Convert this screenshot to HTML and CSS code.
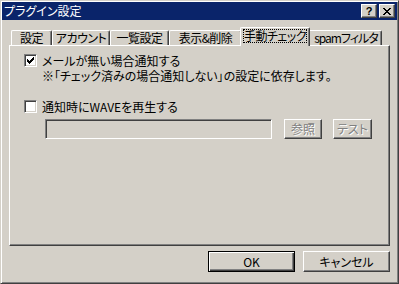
FILE: index.html
```html
<!DOCTYPE html>
<html lang="ja">

<head>
    <meta charset="UTF-8">
    <title>プラグイン設定</title>
    <link rel="stylesheet" href="styles.css">
</head>

<body>
    <div class="window">
        <div class="titlebar">
            <span class="title">プラグイン設定</span>
            <div class="caption-buttons">
                <span class="cap-btn help">?</span>
                <span class="cap-btn close">
                    <svg width="8" height="7" viewBox="0 0 8 7" shape-rendering="crispEdges">
                        <path d="M0 0h2v1h-2zM6 0h2v1h-2zM1 1h2v1h-2zM5 1h2v1h-2zM2 2h4v1h-4zM3 3h2v1h-2zM2 4h4v1h-4zM1 5h2v1h-2zM5 5h2v1h-2zM0 6h2v1h-2zM6 6h2v1h-2z" fill="#000"/>
                    </svg>
                </span>
            </div>
        </div>

        <div class="client">
            <div class="tabs">
                <div class="tab tab-general">設定</div>
                <div class="tab tab-account">アカウント</div>
                <div class="tab tab-list">一覧設定</div>
                <div class="tab tab-view">表示&amp;削除</div>
                <div class="tab tab-check selected"><span class="focus">手動チェック</span></div>
                <div class="tab tab-spam">spamフィルタ</div>
            </div>

            <div class="panel">
                <div class="check-row">
                    <span class="checkbox">
                        <svg width="9" height="9" viewBox="0 0 9 9" shape-rendering="crispEdges">
                            <path d="M7 1h1v1h-1zM6 2h2v1h-2zM1 3h1v1h-1zM5 3h3v1h-3zM1 4h2v1h-2zM4 4h3v1h-3zM1 5h5v1h-5zM2 6h3v1h-3zM3 7h1v1h-1z" fill="#000"/>
                        </svg>
                    </span>
                    <span>メールが無い場合通知する</span>
                </div>
                <div class="note">※「チェック済みの場合通知しない」の設定に依存します。</div>

                <div class="check-row wave-row">
                    <span class="checkbox"></span>
                    <span>通知時にWAVEを再生する</span>
                </div>

                <div class="file-row">
                    <div class="field"></div>
                    <button class="btn disabled browse">参照</button>
                    <button class="btn disabled test">テスト</button>
                </div>
            </div>

            <div class="dialog-buttons">
                <button class="btn default">OK</button>
                <button class="btn">キャンセル</button>
            </div>
        </div>
    </div>
</body>

</html>
```

FILE: styles.css
```css
body {
    margin: 0;
    font-family: "Noto Sans CJK JP", "Liberation Sans", sans-serif;
    font-size: 12px;
    font-feature-settings: "palt";
    color: #000;
}

.window {
    width: 399px;
    height: 284px;
    box-sizing: border-box;
    padding: 1px;
    background-color: #d4d0c8;
    border: 1px solid;
    border-color: #d4d0c8 #404040 #404040 #d4d0c8;
    box-shadow: inset 1px 1px #fff, inset -1px -1px #808080;
    display: flex;
    flex-direction: column;
}

.titlebar {
    height: 18px;
    flex: none;
    background-color: #0a246a;
    color: #fff;
    display: flex;
    align-items: center;
    justify-content: space-between;
    padding: 0 2px 0 2px;
}

.title {
    line-height: 18px;
}

.caption-buttons {
    display: flex;
    gap: 2px;
}

.cap-btn {
    width: 16px;
    height: 14px;
    box-sizing: border-box;
    background-color: #d4d0c8;
    border: 1px solid;
    border-color: #fff #404040 #404040 #fff;
    box-shadow: inset -1px -1px #808080;
    display: flex;
    align-items: center;
    justify-content: center;
    color: #000;
}

.cap-btn.help {
    font-family: "Liberation Sans", sans-serif;
    font-weight: bold;
    font-size: 11px;
    line-height: 12px;
}

.client {
    flex: 1;
    padding: 7px 7px 0 7px;
    display: flex;
    flex-direction: column;
}

.tabs {
    height: 18px;
    display: flex;
    align-items: flex-end;
    padding-left: 2px;
}

.tab {
    height: 15px;
    box-sizing: border-box;
    border-left: 1px solid #fff;
    border-top: 1px solid #fff;
    border-right: 1px solid #404040;
    border-radius: 2px 2px 0 0;
    box-shadow: inset -1px 0 #808080;
    display: flex;
    align-items: center;
    justify-content: center;
    white-space: nowrap;
    line-height: 14px;
    letter-spacing: -0.5px;
}

.tab-general { width: 41px; }
.tab-account { width: 58px; }
.tab-list { width: 59px; }
.tab-view { width: 73px; }
.tab-spam { width: 74px; padding-left: 2px; letter-spacing: -1px; }

.tab.selected {
    width: 70px;
    height: 19px;
    margin: 0 -2px -1px -2px;
    background-color: #d4d0c8;
    position: relative;
    z-index: 1;
    align-items: flex-start;
    padding-top: 1px;
}

.focus {
    width: 64px;
    height: 14px;
    box-sizing: border-box;
    outline: 1px dotted #000;
    outline-offset: -1px;
    text-align: center;
    line-height: 14px;
}

.panel {
    height: 201px;
    box-sizing: border-box;
    border: 1px solid;
    border-color: #fff #404040 #404040 #fff;
    box-shadow: inset -1px -1px #808080;
    padding: 6px 0 0 14px;
}

.check-row {
    display: flex;
    align-items: center;
    gap: 5px;
    height: 16px;
}

.checkbox {
    width: 13px;
    height: 13px;
    box-sizing: border-box;
    background-color: #fff;
    border: 1px solid;
    border-color: #808080 #fff #fff #808080;
    box-shadow: inset 1px 1px #404040, inset -1px -1px #d4d0c8;
    padding: 1px;
    display: flex;
}

.note {
    padding-left: 18px;
    line-height: 16px;
    height: 16px;
    white-space: nowrap;
}

.wave-row {
    margin-top: 14px;
}

.file-row {
    display: flex;
    margin-top: 5px;
    padding-left: 21px;
}

.field {
    width: 227px;
    height: 20px;
    box-sizing: border-box;
    background-color: #d4d0c8;
    border: 1px solid;
    border-color: #808080 #fff #fff #808080;
    box-shadow: inset 1px 1px #404040, inset -1px -1px #d4d0c8;
}

.btn {
    font: inherit;
    font-feature-settings: "palt";
    color: #000;
    background-color: #d4d0c8;
    padding: 0;
    margin: 0;
    box-sizing: border-box;
    border: 1px solid;
    border-color: #fff #404040 #404040 #fff;
    box-shadow: inset -1px -1px #808080;
    line-height: 14px;
}

.btn.disabled {
    color: #808080;
    text-shadow: 1px 1px 0 #fff;
    height: 20px;
}

.browse {
    width: 38px;
    margin-left: 12px;
}

.test {
    width: 39px;
    margin-left: 11px;
}

.dialog-buttons {
    display: flex;
    justify-content: flex-end;
    gap: 8px;
    margin-top: 5px;
}

.dialog-buttons .btn {
    width: 87px;
    height: 21px;
}

.btn.default {
    border-color: #000;
    box-shadow: inset 1px 1px #fff, inset -1px -1px #404040, inset -2px -2px #808080;
}
```
